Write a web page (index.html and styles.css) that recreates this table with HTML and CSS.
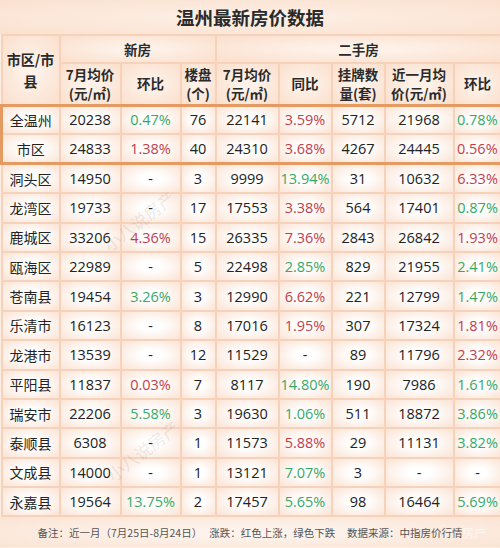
FILE: index.html
```html
<!DOCTYPE html>
<html lang="zh-CN">
<head>
  <meta charset="UTF-8"/>
  <title>温州最新房价数据</title>
  <link rel="stylesheet" href="styles.css">
</head>
<body>
  <div class="sheet">
    <div class="title">温州最新房价数据</div>

    <table class="price-table">
      <colgroup>
        <col class="c-area"><col class="c-new-price"><col class="c-new-mom"><col class="c-new-count">
        <col class="c-old-price"><col class="c-old-yoy"><col class="c-old-list"><col class="c-old-avg"><col class="c-old-mom">
      </colgroup>
      <thead>
        <tr class="head-1">
          <th rowspan="2">市区/市县</th>
          <th colspan="3">新房</th>
          <th colspan="5">二手房</th>
        </tr>
        <tr class="head-2">
          <th>7月均价<br>(元/㎡)</th>
          <th>环比</th>
          <th>楼盘<br>(个)</th>
          <th>7月均价<br>(元/㎡)</th>
          <th>同比</th>
          <th>挂牌数<br>量(套)</th>
          <th>近一月均<br>价(元/㎡)</th>
          <th>环比</th>
        </tr>
      </thead>
      <tbody>
        <tr class="hl hl-top"><td>全温州</td><td>20238</td><td class="down">0.47%</td><td>76</td><td>22141</td><td class="up">3.59%</td><td>5712</td><td>21968</td><td class="down">0.78%</td></tr>
        <tr class="hl hl-bottom"><td>市区</td><td>24833</td><td class="up">1.38%</td><td>40</td><td>24310</td><td class="up">3.68%</td><td>4267</td><td>24445</td><td class="up">0.56%</td></tr>
        <tr><td>洞头区</td><td>14950</td><td>-</td><td>3</td><td>9999</td><td class="down">13.94%</td><td>31</td><td>10632</td><td class="up">6.33%</td></tr>
        <tr><td>龙湾区</td><td>19733</td><td>-</td><td>17</td><td>17553</td><td class="up">3.38%</td><td>564</td><td>17401</td><td class="down">0.87%</td></tr>
        <tr><td>鹿城区</td><td>33206</td><td class="up">4.36%</td><td>15</td><td>26335</td><td class="up">7.36%</td><td>2843</td><td>26842</td><td class="up">1.93%</td></tr>
        <tr><td>瓯海区</td><td>22989</td><td>-</td><td>5</td><td>22498</td><td class="down">2.85%</td><td>829</td><td>21955</td><td class="down">2.41%</td></tr>
        <tr><td>苍南县</td><td>19454</td><td class="down">3.26%</td><td>3</td><td>12990</td><td class="up">6.62%</td><td>221</td><td>12799</td><td class="down">1.47%</td></tr>
        <tr><td>乐清市</td><td>16123</td><td>-</td><td>8</td><td>17016</td><td class="up">1.95%</td><td>307</td><td>17324</td><td class="up">1.81%</td></tr>
        <tr><td>龙港市</td><td>13539</td><td>-</td><td>12</td><td>11529</td><td>-</td><td>89</td><td>11796</td><td class="up">2.32%</td></tr>
        <tr><td>平阳县</td><td>11837</td><td class="up">0.03%</td><td>7</td><td>8117</td><td class="down">14.80%</td><td>190</td><td>7986</td><td class="down">1.61%</td></tr>
        <tr><td>瑞安市</td><td>22206</td><td class="down">5.58%</td><td>3</td><td>19630</td><td class="down">1.06%</td><td>511</td><td>18872</td><td class="down">3.86%</td></tr>
        <tr><td>泰顺县</td><td>6308</td><td>-</td><td>1</td><td>11573</td><td class="up">5.88%</td><td>29</td><td>11131</td><td class="down">3.82%</td></tr>
        <tr><td>文成县</td><td>14000</td><td>-</td><td>1</td><td>13121</td><td class="down">7.07%</td><td>3</td><td>-</td><td>-</td></tr>
        <tr><td>永嘉县</td><td>19564</td><td class="down">13.75%</td><td>2</td><td>17457</td><td class="down">5.65%</td><td>98</td><td>16464</td><td class="down">5.69%</td></tr>
      </tbody>
    </table>

    <div class="note">备注：近一月（7月25日-8月24日）&nbsp;&nbsp;&nbsp;涨跌：红色上涨，绿色下跌&nbsp;&nbsp;&nbsp;&nbsp;&nbsp;数据来源：中指房价行情</div>

    <span class="mark mark-1">小八说房产</span>
    <span class="mark mark-2">小八说房产</span>
    <span class="mark mark-3">房产</span>
  </div>
</body>
</html>
```

FILE: styles.css
```css
* {
  box-sizing: border-box;
}

body {
  margin: 0;
  background: #fdeee4;
  font-family: "Open Sans", "Noto Sans CJK SC", sans-serif;
  color: #222;
}

.sheet {
  position: relative;
  width: 500px;
  overflow: hidden;
}

.title {
  height: 34px;
  display: flex;
  align-items: center;
  justify-content: center;
  font-family: "Noto Sans CJK SC", sans-serif;
  font-size: 18.5px;
  font-weight: 700;
  color: #2a2a2a;
  background: radial-gradient(ellipse at center, #fdf0e7 0%, #fbe1cf 100%);
}

.price-table {
  width: 500px;
  table-layout: fixed;
  border-collapse: collapse;
}

.c-area { width: 58px; }
.c-new-price { width: 61px; }
.c-new-mom { width: 60px; }
.c-new-count { width: 35px; }
.c-old-price { width: 63px; }
.c-old-yoy { width: 53px; }
.c-old-list { width: 53px; }
.c-old-avg { width: 69px; }
.c-old-mom { width: 48px; }

.price-table th,
.price-table td {
  border: 2px solid #f6d2bb;
  text-align: center;
  padding: 0 1px;
  white-space: nowrap;
}

.price-table th {
  font-family: "Noto Sans CJK SC", sans-serif;
  font-weight: 700;
  font-size: 13.5px;
  line-height: 19px;
  color: #2a2a2a;
  background: radial-gradient(ellipse at center, #fdf1e8 20%, #fbdfcc 100%);
}

.price-table th[rowspan] {
  white-space: normal;
  font-size: 14px;
  line-height: 22px;
  padding: 0 4px;
}

.head-1 { height: 28px; }
.head-2 { height: 42px; }

.price-table td {
  height: 29.4px;
  font-size: 14.5px;
  background: radial-gradient(ellipse at center, #ffffff 25%, #fbe3d4 100%);
}

.price-table td:first-child {
  font-family: "Noto Sans CJK SC", sans-serif;
  font-size: 14px;
}

.price-table td.up { color: #c43d4b; }
.price-table td.down { color: #37a867; }

.hl td:first-child { border-left: 3px solid #e59a61; }
.hl td:last-child { border-right: 3px solid #e59a61; }
.hl-top td { border-top: 3px solid #e59a61; }
.hl-bottom td { border-bottom: 3px solid #e59a61; }

.note {
  height: 30px;
  display: flex;
  align-items: center;
  justify-content: center;
  font-family: "Noto Sans CJK SC", sans-serif;
  font-size: 10.5px;
  color: #555;
  background: radial-gradient(ellipse at center, #fdf3ec 20%, #fbe3d3 100%);
}

.mark {
  position: absolute;
  font-family: "Noto Sans CJK SC", sans-serif;
  font-size: 17px;
  color: rgba(120, 110, 110, 0.14);
  transform: rotate(-38deg);
  pointer-events: none;
}

.mark-1 { left: 96px; top: 208px; }
.mark-2 { left: 100px; top: 438px; }
.mark-3 { left: 462px; top: 524px; color: rgba(255, 255, 255, 0.55); transform: none; font-size: 12px; }
```
